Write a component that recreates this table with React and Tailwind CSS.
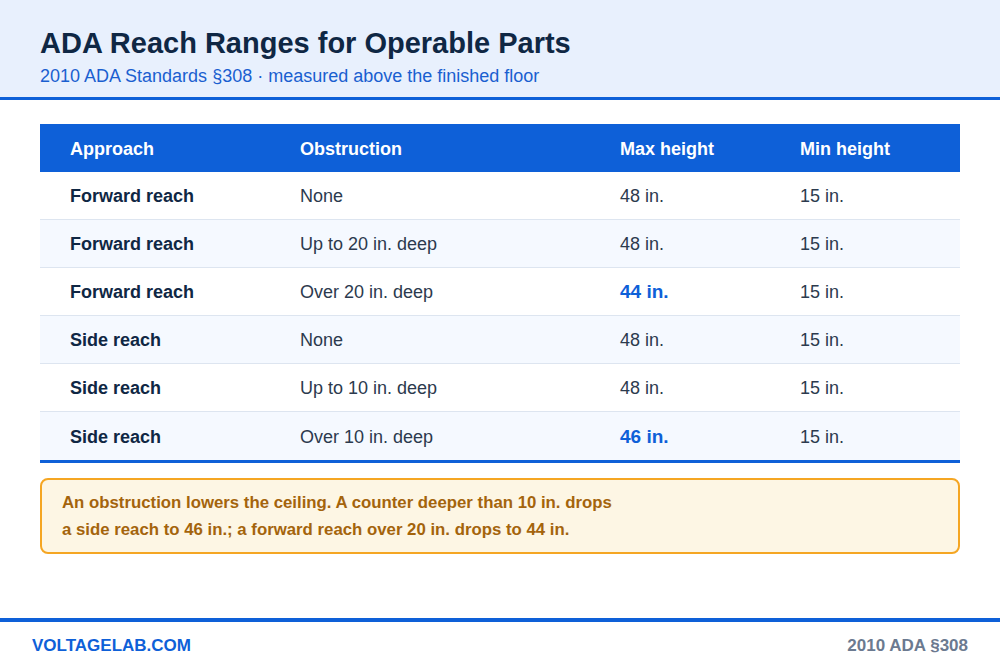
const ROWS = [
  { approach: 'Forward reach', obstruction: 'None', max: '48 in.', min: '15 in.' },
  { approach: 'Forward reach', obstruction: 'Up to 20 in. deep', max: '48 in.', min: '15 in.' },
  { approach: 'Forward reach', obstruction: 'Over 20 in. deep', max: '44 in.', min: '15 in.', hot: true },
  { approach: 'Side reach', obstruction: 'None', max: '48 in.', min: '15 in.' },
  { approach: 'Side reach', obstruction: 'Up to 10 in. deep', max: '48 in.', min: '15 in.' },
  { approach: 'Side reach', obstruction: 'Over 10 in. deep', max: '46 in.', min: '15 in.', hot: true },
]

const COLS = 'grid grid-cols-[230px_320px_180px_1fr] px-[30px] pt-[2px] items-center'

export default function App() {
  return (
    <div className="w-[1000px] h-[670px] bg-white flex flex-col font-['Liberation_Sans',Arial,sans-serif]">
      {/* Header */}
      <div className="h-[100px] bg-[#e8f0fd] border-b-[3px] border-[#0e60d8] px-10 pt-[26px]">
        <h1 className="text-[29px] leading-[34px] font-bold text-[#0f2744]">ADA Reach Ranges for Operable Parts</h1>
        <div className="text-[18px] leading-[22px] mt-[5px] text-[#1a5fd0]">2010 ADA Standards §308 · measured above the finished floor</div>
      </div>

      {/* Table */}
      <div className="mx-10 mt-6 border-b-[3px] border-[#0e60d8]">
        <div className={`${COLS} h-12 bg-[#0e60d8] text-white font-bold text-[18px]`}>
          <div>Approach</div>
          <div>Obstruction</div>
          <div>Max height</div>
          <div>Min height</div>
        </div>
        {ROWS.map((r, i) => (
          <div
            key={i}
            className={`${COLS} h-12 text-[18px] ${i % 2 ? 'bg-[#f5f9ff]' : 'bg-white'} ${i < ROWS.length - 1 ? 'border-b border-[#dde5f0]' : ''}`}
          >
            <div className="font-bold text-[#0f2744]">{r.approach}</div>
            <div className="text-[#2c3a4e]">{r.obstruction}</div>
            <div className={r.hot ? 'font-bold text-[#0e60d8] text-[19px]' : 'text-[#2c3a4e]'}>{r.max}</div>
            <div className="text-[#2c3a4e]">{r.min}</div>
          </div>
        ))}
      </div>

      {/* Callout */}
      <div className="mx-10 mt-[15px] h-[76px] rounded-lg border-2 border-[#f5a623] bg-[#fdf6e4] px-5 pt-[9px]">
        <p className="text-[16.8px] leading-[27px] font-bold text-[#a4640c]">
          An obstruction lowers the ceiling. A counter deeper than 10 in. drops
          <br />
          a side reach to 46 in.; a forward reach over 20 in. drops to 44 in.
        </p>
      </div>

      {/* Footer */}
      <div className="mt-auto border-t-4 border-[#0e60d8] h-[52px] px-8 flex items-center justify-between">
        <span className="text-[17px] font-bold text-[#0e60d8]">VOLTAGELAB.COM</span>
        <span className="text-[17px] font-bold text-[#6b7a90]">2010 ADA §308</span>
      </div>
    </div>
  )
}
